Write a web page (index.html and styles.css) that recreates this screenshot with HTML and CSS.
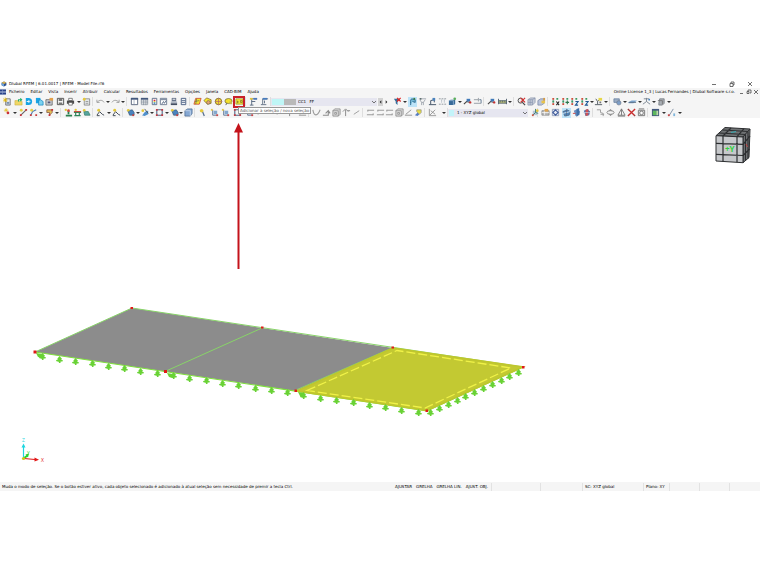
FILE: index.html
```html
<!DOCTYPE html>
<html lang="pt">
<head>
<meta charset="utf-8">
<title>Dlubal RFEM</title>
<meta name="viewport" content="width=device-width, initial-scale=1">
<link rel="stylesheet" href="styles.css">
</head>
<body>
<svg class="sprite" aria-hidden="true">
  <symbol id="cube" viewBox="0 0 10 10"><path d="M1 3l4-2 4 2v4L5 9 1 7z" fill="#2d4f8f"/><path d="M1 3l4 2v4L1 7z" fill="#6fa3d8"/><path d="M1 3l4-2 4 2-4 2z" fill="#d8b04a"/></symbol>
  <symbol id="new" viewBox="0 0 10 10"><path d="M3 2h5v7H3z" fill="#e9edf2" stroke="#555" stroke-width=".8"/><path d="M4 6h3M4 7.5h3" stroke="#3c5c8c" stroke-width=".8"/><path d="M.5 1.5l4 4M4.500 1.500l-4 4M2.500.500v5M0 3.500h5" stroke="#e2b400" stroke-width=".8"/></symbol>
  <symbol id="open" viewBox="0 0 10 10"><path d="M1 4h3l1 1h4v4H1z" fill="#f0d766" stroke="#c0a030" stroke-width=".5"/><path d="M5 5V3h3M7 1.500L8.500 3 7 4.500" fill="none" stroke="#24ae6a" stroke-width="1.200"/></symbol>
  <symbol id="cloud" viewBox="0 0 10 10"><path d="M2 1h3a4 4 0 010 8H2z" fill="#18a4e4"/><path d="M3 5h3M5 3.500L6.500 5 5 6.500" stroke="#fff" stroke-width="1" fill="none"/></symbol>
  <symbol id="blocks" viewBox="0 0 10 10"><path d="M1 1h5v6H1z" fill="#18a4e4"/><path d="M4 4l2-1 3 2v4H4z" fill="#7cd2f0" stroke="#1289c6" stroke-width=".8"/></symbol>
  <symbol id="archive" viewBox="0 0 10 10"><path d="M1 3h7v6H1z" fill="#ccd0d6" stroke="#555" stroke-width=".8"/><path d="M3 5h3v2H3z" fill="#557"/><path d="M5 1h4v3H5z" fill="#e3a04a"/></symbol>
  <symbol id="save" viewBox="0 0 10 10"><path d="M1.500 1.500h7v7h-7z" fill="#f2f2f2" stroke="#4b4b4b"/><path d="M3 2h4v2.500H3zM3 6h4v2.500H3z" fill="#777"/></symbol>
  <symbol id="print" viewBox="0 0 10 10"><path d="M3 1.500h4V4H3z" fill="#fff" stroke="#444" stroke-width=".7"/><path d="M1 4h8v3.500H1z" fill="#4a4a4a"/><path d="M3 6h4v3H3z" fill="#fff" stroke="#444" stroke-width=".7"/></symbol>
  <symbol id="doc" viewBox="0 0 10 10"><path d="M2.500 2h6v7h-6z" fill="#e5e8ea" stroke="#777" stroke-width=".8"/><path d="M4 5h3M4 7h3" stroke="#777" stroke-width=".7"/><circle cx="2.500" cy="2.500" r="1.600" fill="#e6c83c"/></symbol>
  <symbol id="undo" viewBox="0 0 10 10"><path d="M1 3v3h3M1.500 5.500C4 3 7 3 9 6" fill="none" stroke="#929292" stroke-width=".9"/></symbol>
  <symbol id="redo" viewBox="0 0 10 10"><path d="M9 3v3H6M8.500 5.500C6 3 3 3 1 6" fill="none" stroke="#929292" stroke-width=".9"/></symbol>
  <symbol id="panel" viewBox="0 0 10 10"><path d="M1.500 1.500h7v7h-7z" fill="#fff" stroke="#546078"/><path d="M1 1h8v2H1z" fill="#44597e"/><path d="M4.500 3v6" stroke="#8090a8" stroke-width=".7"/></symbol>
  <symbol id="table" viewBox="0 0 10 10"><path d="M1.500 1.500h7v7h-7zM1 4.500h8M1 6.500h8M4 3v6M6.500 3v6" fill="none" stroke="#7d8796" stroke-width=".7"/><path d="M1 1h8v2H1z" fill="#44597e"/></symbol>
  <symbol id="colors" viewBox="0 0 10 10"><path d="M2.500 1.500h5v7h-5z" fill="#fff" stroke="#5a6a84"/><path d="M4 3h2v1.500H4z" fill="#d24"/><path d="M4 4.500h2V6H4z" fill="#dc3"/><path d="M4 6h2v1.500H4z" fill="#27b"/></symbol>
  <symbol id="chart" viewBox="0 0 10 10"><path d="M1.500 1.500h7v7h-7z" fill="#fff" stroke="#5a6a84" stroke-width=".9"/><path d="M2 3h6M3 8l2-3 1 2 2-3" stroke="#5a6a84" fill="none"/></symbol>
  <symbol id="stack" viewBox="0 0 10 10"><path d="M3 1h5v4H3z" fill="#67748a"/><path d="M2 5h7v2H2z" fill="#aeb6c2"/><path d="M2 7h7v2H2z" fill="#444f63"/><path d="M4 2.500h3" stroke="#fff"/></symbol>
  <symbol id="column" viewBox="0 0 10 10"><path d="M2.500 1.500h5v7h-5z" fill="#eef1f5" stroke="#44597e"/><path d="M3 4h4M3 6h4" stroke="#44597e" stroke-width=".9"/></symbol>
  <symbol id="sel-plane" viewBox="0 0 10 10"><path d="M3 1.500h6L7 8H1z" fill="#f4e42c" stroke="#c8372d" stroke-width=".8"/><path d="M2 5l5-1M4 2L3 8" stroke="#555" stroke-width=".7"/></symbol>
  <symbol id="sel-poly" viewBox="0 0 10 10"><path d="M1 4l3-3 5 2v4L5 8z" fill="#f4e42c" stroke="#806020" stroke-width=".8"/><circle cx="6" cy="6" r="2" fill="#e7a56f" stroke="#555" stroke-width=".6"/></symbol>
  <symbol id="sel-circle" viewBox="0 0 10 10"><circle cx="5" cy="5" r="3.600" fill="#f3db31" stroke="#75602a" stroke-width=".9"/><path d="M5 1v8M1 5h8" stroke="#b26b68" stroke-width=".8"/></symbol>
  <symbol id="sel-lasso" viewBox="0 0 10 10"><ellipse cx="5" cy="4.500" rx="4" ry="2.800" fill="#f3e02b" stroke="#6f6531" stroke-width=".8"/><path d="M6 5h3v3H6z" fill="#c9bc55"/><path d="M3 7l-1 2" stroke="#555"/></symbol>
  <symbol id="sel-add" viewBox="0 0 10 10"><path d="M1 2h8v6H1z" fill="#f8e838" stroke="#8c8128" stroke-width=".7"/><path d="M3 4v3M2 5.500h2M6 4h2v2H6z" stroke="#665d24" stroke-width=".7" fill="none"/></symbol>
  <symbol id="support" viewBox="0 0 10 10"><path d="M3 9V2h6M3 5h4M1 9h4" fill="none" stroke="#53647d"/><path d="M5 1h4v2H5z" fill="#4a79bb"/><path d="M1 1h3v2H1z" fill="#dec33f"/></symbol>
  <symbol id="load" viewBox="0 0 10 10"><path d="M1 8.500h6M3 8V2h6M5 4v3" fill="none" stroke="#5b6b80"/><path d="M3 1h5v2H3z" fill="#477cbd"/></symbol>
  <symbol id="filter" viewBox="0 0 10 10"><path d="M1 2h6L5 5v4L3 7V5z" fill="#376e9b"/><path d="M4.500 1l4 4M8.500 1l-4 4" stroke="#d22" stroke-width="1.300"/></symbol>
  <symbol id="show" viewBox="0 0 10 10"><path d="M3 9C3 6 2 4 4 2l4 1v3L5 5" fill="#75b9d8" stroke="#28668c"/><path d="M6 1h2v2H6z" fill="#387b42"/></symbol>
  <symbol id="frame" viewBox="0 0 10 10"><path d="M1 2h8M2 3l2 3v3M8 3L6 6v3M4 6h2" fill="none" stroke="#8b949f" stroke-width=".8"/><circle cx="3" cy="2" r="1" fill="#566"/></symbol>
  <symbol id="member" viewBox="0 0 10 10"><path d="M1 8.500h8M3 8V4l4-1v3" fill="none" stroke="#38495d"/><path d="M5 1h3v3H5z" fill="#4b82bd"/></symbol>
  <symbol id="dots" viewBox="0 0 10 10"><path d="M1 2h8M1 8h8" stroke="#8c949c" stroke-dasharray="2 1"/><path d="M4 3v4M7 3v4" stroke="#8795a5" stroke-dasharray="1 1"/></symbol>
  <symbol id="solid" viewBox="0 0 10 10"><path d="M1 4l2-1h5v5l-2 1H1z" fill="#376a99"/><path d="M1 4h5v5" fill="none" stroke="#aac7e0" stroke-width=".7"/><circle cx="7.500" cy="2" r="1.500" fill="#5aae5d"/></symbol>
  <symbol id="link" viewBox="0 0 10 10"><path d="M1 8l3-3 4 1" stroke="#444" stroke-width="1.200" fill="none"/><path d="M4 2h4v3H4z" fill="#3f79b8"/><circle cx="8" cy="6" r="1.300" fill="#c63434"/></symbol>
  <symbol id="dims" viewBox="0 0 10 10"><path d="M1 3h5M6 1v4M1 7h8" stroke="#929aa2" fill="none"/><path d="M7 3h2v4" stroke="#5e7690" fill="none"/></symbol>
  <symbol id="ruler" viewBox="0 0 10 10"><path d="M.5 2v6M9.500 2v6" stroke="#456"/><path d="M1 4h8v3H1z" fill="#b9bd77" stroke="#536472" stroke-width=".8"/><path d="M3 4v2M5 4v2M7 4v2" stroke="#456" stroke-width=".7"/></symbol>
  <symbol id="zoomx" viewBox="0 0 10 10"><circle cx="4" cy="4" r="2.800" fill="#eee" stroke="#444"/><path d="M6 6l3 3" stroke="#444" stroke-width="1.300"/><path d="M4 1l5 5M9 1L4 6" stroke="#d72b2b" stroke-width="1.200"/></symbol>
  <symbol id="box" viewBox="0 0 10 10"><path d="M1 3l3-2h5v5L6 9H1z" fill="#c4cbd8" stroke="#8b95ab" stroke-width=".8"/><path d="M1 3h5v6M6 3l3-2M3.500 3v6M1 6h5" fill="none" stroke="#8390ac" stroke-width=".7"/></symbol>
  <symbol id="boxy" viewBox="0 0 10 10"><path d="M1 4l3-2h4v5L5 9H1z" fill="#b9c4da" stroke="#7583a3" stroke-width=".8"/><path d="M5 4h4v3H5z" fill="#e8c34b"/><path d="M7 1h2v3H7z" fill="#d39b45"/></symbol>
  <symbol id="axis" viewBox="0 0 10 10"><path d="M2.500 2v6" stroke="#8fa0b2" stroke-width=".8"/><path d="M1.500 1h2v2h-2zM1.500 7h2v2h-2z" fill="#d24b37"/><path d="M1.500 4h2v2h-2zM6 1h2v2H6z" fill="#3a9b61"/></symbol>
  <symbol id="axisx" viewBox="0 0 10 10"><use href="#axis"/><path d="M6 5l3 4M9 5L6 9" stroke="#222" stroke-width="1.200"/></symbol>
  <symbol id="axisy" viewBox="0 0 10 10"><use href="#axis"/><path d="M5 6h4M7 4v4" stroke="#2b774d" stroke-width="1.200"/></symbol>
  <symbol id="axisz" viewBox="0 0 10 10"><use href="#axis"/><path d="M6 5h3L6 9h3" fill="none" stroke="#1f5894" stroke-width="1.200"/></symbol>
  <symbol id="pick" viewBox="0 0 10 10"><path d="M2 2l2 3 3-3M4 5v3M1 8.500h8" fill="none" stroke="#4b555c"/><path d="M5 1h4v3H5z" fill="#e5d649"/><path d="M6 5h2v2H6z" fill="#777"/></symbol>
  <symbol id="render" viewBox="0 0 10 10"><path d="M1 2h6v4H1z" fill="#9bacc4" stroke="#627a9b" stroke-width=".8"/><circle cx="6.500" cy="6.500" r="2.400" fill="#7e9fc9" stroke="#6c7789" stroke-width=".7"/></symbol>
  <symbol id="beam" viewBox="0 0 10 10"><path d="M0 6l4-2h6L6 7H1z" fill="#7da5cf"/><path d="M1 6h8" stroke="#5d7085"/></symbol>
  <symbol id="triad" viewBox="0 0 10 10"><path d="M1 8l4-3V1M5 5l4 3M2 2h6" fill="none" stroke="#77828f"/><circle cx="8" cy="3" r="1" fill="#4382bf"/></symbol>
  <symbol id="slab" viewBox="0 0 10 10"><path d="M3 2h5v5l-2 2H2V7z" fill="#a9aeb4" stroke="#6b737a" stroke-width=".8"/><path d="M1 4h5v4" stroke="#777" fill="none"/></symbol>
  <symbol id="node" viewBox="0 0 10 10"><path d="M2 1l3 3M5 1L2 4M3.500 0v5M1 2.500h5" stroke="#e4c22d" stroke-width=".8"/><circle cx="5.500" cy="5.500" r="1.500" fill="#c92f37"/></symbol>
  <symbol id="line" viewBox="0 0 10 10"><path d="M2 8l6-6" stroke="#666" stroke-width="1.200"/><path d="M1 7h2v2H1zM7 1h2v2H7z" fill="#c92f37"/><circle cx="2.500" cy="2.500" r="1.600" fill="#e3d04a"/></symbol>
  <symbol id="poly" viewBox="0 0 10 10"><path d="M2 8l2-4 4-2" stroke="#4678b2" stroke-width="1.200" fill="none"/><path d="M1 7h2v2H1zM7 7h2v2H7z" fill="#c83b3b"/><circle cx="3" cy="2.500" r="1.600" fill="#e3d04a"/></symbol>
  <symbol id="surf" viewBox="0 0 10 10"><path d="M2 2h6v3L5 8V5H2z" fill="#e5bd58" stroke="#7a5040" stroke-width=".8"/><path d="M4 7h2v2H4zM7 1h2v2H7z" fill="#c92f37"/></symbol>
  <symbol id="nsup" viewBox="0 0 10 10"><path d="M5 3v4M2 8.500h7" stroke="#2a814e" stroke-width="2"/><circle cx="5" cy="3" r="1.500" fill="#d04638"/><circle cx="2" cy="2" r="1.300" fill="#e3c83a"/></symbol>
  <symbol id="lsup" viewBox="0 0 10 10"><path d="M1 5h8M3 5v4M7 5v4M1.500 8.500h7" stroke="#2f855a" stroke-width="1.300"/><path d="M1 4h8" stroke="#c84036" stroke-width="1.200"/><circle cx="3" cy="2" r="1.300" fill="#e3c83a"/></symbol>
  <symbol id="ssup" viewBox="0 0 10 10"><path d="M2 4h5l2 4H3z" fill="#58a5a0" stroke="#35806a" stroke-width=".8"/><circle cx="2.500" cy="2.500" r="1.500" fill="#e3c83a"/></symbol>
  <symbol id="hinge" viewBox="0 0 10 10"><path d="M1 8l3-4 3 3 2 1M1 8.500h3" fill="none" stroke="#454d57" stroke-width="1.100"/><circle cx="3" cy="2.500" r="1.600" fill="#e3c83a"/></symbol>
  <symbol id="solidn" viewBox="0 0 10 10"><path d="M2 3l5-1 2 3v3L4 8z" fill="#4a83be" stroke="#31506e" stroke-width=".7"/><circle cx="2.500" cy="2.500" r="1.500" fill="#e3c83a"/><path d="M7 7h2v2H7z" fill="#ca413e"/></symbol>
  <symbol id="opening" viewBox="0 0 10 10"><path d="M2 2h6v6H2z" fill="none" stroke="#506886" stroke-width="1.200"/><path d="M1 1h2v2H1zM7 1h2v2H7zM1 7h2v2H1zM7 7h2v2H7z" fill="#c33b44"/></symbol>
  <symbol id="cut" viewBox="0 0 10 10"><path d="M1 8c2 0 2-5 7-5v4L4 9z" fill="#4f90cc"/><path d="M4 1l4 5" stroke="#555"/><circle cx="2" cy="3" r="1.500" fill="#e3c83a"/></symbol>
  <symbol id="cubeb" viewBox="0 0 10 10"><path d="M1 3l3-2h5v5L7 9H1z" fill="#86a8d3" stroke="#48688f" stroke-width=".8"/><path d="M1 3h6v6" stroke="#dce7f5" fill="none" stroke-width=".7"/></symbol>
  <symbol id="pin" viewBox="0 0 10 10"><path d="M5 4l2 5" stroke="#566f90" stroke-width="1.400"/><circle cx="4" cy="3" r="2" fill="#e5c93b"/></symbol>
  <symbol id="case" viewBox="0 0 10 10"><path d="M3 2v6h6" stroke="#566f90" fill="none"/><path d="M4 3h4v4H4z" fill="#83a8ce"/><path d="M1 1h2v2H1z" fill="#e5c93b"/><path d="M7 7h2v2H7z" fill="#ce4949"/></symbol>
  <symbol id="arc" viewBox="0 0 10 10"><path d="M1 2c1 7 5 8 8 0" fill="none" stroke="#999" stroke-width="1.200"/></symbol>
  <symbol id="arrow" viewBox="0 0 10 10"><path d="M1 8h6V4M4 6l3-3 2 3" fill="none" stroke="#8c8c8c" stroke-width="1.200"/></symbol>
  <symbol id="graybox" viewBox="0 0 10 10"><path d="M1 3l2-2h6v6L7 9H1z" fill="#ddd" stroke="#888" stroke-width=".9"/><path d="M1 3h6v6M3 5h2v2H3z" fill="none" stroke="#888" stroke-width=".8"/></symbol>
  <symbol id="tree" viewBox="0 0 10 10"><path d="M4 9V2M1 4l3-3 3 3M6 3h3" fill="none" stroke="#858585"/></symbol>
  <symbol id="slash" viewBox="0 0 10 10"><path d="M2 7l6-4" stroke="#999"/></symbol>
  <symbol id="bars" viewBox="0 0 10 10"><path d="M2 2.500h7M1 7.500h7M2 2v2M8 6v2" stroke="#919191" fill="none"/></symbol>
  <symbol id="angle" viewBox="0 0 10 10"><path d="M2 7l6-5M1 8h8" stroke="#919191" fill="none"/></symbol>
  <symbol id="brush" viewBox="0 0 10 10"><path d="M1 8l3-3 2 2-2 2z" fill="#577ec2"/><path d="M3 2h5v3L6 7 3 4z" fill="#e7dc46" stroke="#888" stroke-width=".7"/></symbol>
  <symbol id="graph" viewBox="0 0 10 10"><path d="M1.500 1v7.500H9M2 8l6-6M3 3l5 4" fill="none" stroke="#8b8b8b" stroke-width=".9"/></symbol>
  <symbol id="plane" viewBox="0 0 10 10"><path d="M2 3h5v5H2z" fill="#b7c5d6"/><path d="M2 8l3-3 3 1M5 5V1" fill="none" stroke="#397e6e"/><path d="M1 7h2v2H1z" fill="#c54"/><circle cx="7" cy="3" r="1.500" fill="#e0c23f"/></symbol>
  <symbol id="grid" viewBox="0 0 10 10"><path d="M1 3h8v5H1z" fill="#bbb" stroke="#777" stroke-width=".7"/><path d="M1 5h8M4 3v5" stroke="#fff" stroke-width=".7"/><path d="M4 1h4v3H4z" fill="#e0a44b"/></symbol>
  <symbol id="snap" viewBox="0 0 10 10"><path d="M1.500 1.500h7v7h-7z" fill="#e5e9f3" stroke="#8d9bb9"/><path d="M5 2l3 3-3 3-3-3z" fill="none" stroke="#415d9c" stroke-width="1.200"/></symbol>
  <symbol id="disc" viewBox="0 0 10 10"><path d="M1 4l5-2 3 2-1 4-5 1z" fill="#4e83b8" stroke="#445a76" stroke-width=".7"/><path d="M1 6l8-2" stroke="#d8e9f6"/><path d="M5 1v8" stroke="#54657c" stroke-width=".7"/></symbol>
  <symbol id="discb" viewBox="0 0 10 10"><path d="M2 3l4-2 3 3-1 4-4 1z" fill="#6c8fc0"/><path d="M5 1l3-1v7L5 10z" fill="#3f6fa8"/><path d="M1 6h3" stroke="#c44" stroke-width="1"/></symbol>
  <symbol id="discr" viewBox="0 0 10 10"><path d="M2 3l4-2 3 3-1 4-4 1z" fill="#5278b2"/><path d="M4 2l3-1v7L4 9z" fill="#cf4f53"/><path d="M1 5h8" stroke="#ccd8e8" stroke-width=".7"/></symbol>
  <symbol id="hook" viewBox="0 0 10 10"><path d="M1 2h4v3l3 1v3M5 7h4" fill="none" stroke="#999"/></symbol>
  <symbol id="rhomb" viewBox="0 0 10 10"><path d="M5 1l2 2H3zM5 9l2-2H3z" fill="#888"/><ellipse cx="5" cy="5" rx="4" ry="2" fill="none" stroke="#888"/></symbol>
  <symbol id="mirror" viewBox="0 0 10 10"><path d="M5 1L1 8h8zM5 1v7M1 9h8" fill="none" stroke="#777"/></symbol>
  <symbol id="del" viewBox="0 0 10 10"><path d="M1 1l8 8M9 1L1 9" stroke="#c92b2b" stroke-width="1.500"/><path d="M1 1h1v1H1zM8 8h1v1H8z" fill="#555"/></symbol>
  <symbol id="camera" viewBox="0 0 10 10"><path d="M1.500 2.500h7v6h-7z" fill="#ddd" stroke="#777"/><circle cx="5" cy="5.500" r="2" fill="#fff" stroke="#777"/><path d="M2 1h6" stroke="#777"/></symbol>
  <symbol id="sheet" viewBox="0 0 10 10"><path d="M1 1h8v8H1z" fill="#44597e"/><path d="M2 3h4v5H2z" fill="#5cb85c"/><path d="M6 3h2v5H6z" fill="#bde0a5"/></symbol>
  <symbol id="dim" viewBox="0 0 10 10"><path d="M2 9l5-8" stroke="#7b8ba0"/><path d="M1 7h2v2H1z" fill="#c44"/><path d="M7 6h2v3H7z" fill="#7fb5db"/></symbol>
  <symbol id="foot" viewBox="0 0 8 8"><path d="M4 0l3 3.500-1.500.300L8 5 7 6.500 5.500 6 5 8H3.500L3 6.500.500 6 0 4.500l2-.200L1.500 3z" fill="#69d235"/></symbol>
</svg>

<main class="app">
  <header class="titlebar">
    <svg class="logo" aria-hidden="true"><use href="#cube"/></svg>
    <h1>Dlubal RFEM | 6.01.0017 | RFEM - Model File.rf6</h1>
    <div class="window-buttons">
      <button aria-label="Minimizar"><svg viewBox="0 0 6 6"><path d="M1 3.500h4" /></svg></button>
      <button aria-label="Restaurar"><svg viewBox="0 0 6 6"><path d="M1 2.500h3v3H1zM2 2V1h3v3H4"/></svg></button>
      <button aria-label="Fechar"><svg viewBox="0 0 6 6"><path d="M1 1l4 4M5 1L1 5"/></svg></button>
    </div>
  </header>

  <nav class="menubar">
    <svg class="badge" viewBox="0 0 7 6" aria-hidden="true"><path d="M0 0h7v6H0z" fill="#27418a"/><path d="M0 3h7" stroke="#dce3f3"/><path d="M3 0v6" stroke="#8fa1cc" stroke-width=".7"/></svg>
    <button>Ficheiro</button><button>Editar</button><button>Vista</button><button>Inserir</button><button>Atribuir</button><button>Calcular</button><button>Resultados</button><button>Ferramentas</button><button>Opções</button><button>Janela</button><button>CAD-BIM</button><button>Ajuda</button>
    <span class="license">Online License 1_3 | Lucas Fernandes | Dlubal Software s.r.o.</span>
    <div class="document-buttons">
      <button aria-label="Minimizar documento"><svg viewBox="0 0 6 6"><path d="M1 4.500h3"/></svg></button>
      <button aria-label="Restaurar documento"><svg viewBox="0 0 6 6"><path d="M1 2.500h2v2H1zM2 2V1h3v3H4"/></svg></button>
      <button aria-label="Fechar documento"><svg viewBox="0 0 6 6"><path d="M1 1l4 4M5 1L1 5"/></svg></button>
    </div>
  </nav>

  <div class="toolbar standard" role="toolbar" aria-label="Padrão">
    <div class="group">
      <button aria-label="Novo"><svg><use href="#new"/></svg></button>
      <button aria-label="Abrir"><svg><use href="#open"/></svg></button>
      <button aria-label="Nuvem"><svg><use href="#cloud"/></svg></button>
      <button aria-label="Blocos"><svg><use href="#blocks"/></svg></button>
      <button aria-label="Arquivo"><svg><use href="#archive"/></svg></button>
      <button aria-label="Guardar"><svg><use href="#save"/></svg></button>
      <button aria-label="Imprimir"><svg><use href="#print"/></svg></button>
      <button class="more" aria-label="Opções de impressão"></button>
      <button aria-label="Relatório"><svg><use href="#doc"/></svg></button>
    </div>
    <div class="group">
      <button aria-label="Anular"><svg><use href="#undo"/></svg></button><button class="more" aria-label="Lista anular"></button>
      <button aria-label="Refazer"><svg><use href="#redo"/></svg></button><button class="more" aria-label="Lista refazer"></button>
    </div>
    <div class="group">
      <button aria-label="Navegador"><svg><use href="#panel"/></svg></button>
      <button aria-label="Tabelas"><svg><use href="#table"/></svg></button>
      <button aria-label="Painel de cores"><svg><use href="#colors"/></svg></button>
      <button aria-label="Diagramas"><svg><use href="#chart"/></svg></button>
      <button aria-label="Camadas"><svg><use href="#stack"/></svg></button>
      <button aria-label="Painel"><svg><use href="#column"/></svg></button>
    </div>
    <div class="group">
      <button aria-label="Selecionar plano"><svg><use href="#sel-plane"/></svg></button>
      <button aria-label="Selecionar polígono"><svg><use href="#sel-poly"/></svg></button>
      <button aria-label="Selecionar círculo"><svg><use href="#sel-circle"/></svg></button>
      <button aria-label="Selecionar laço"><svg><use href="#sel-lasso"/></svg></button>
      <button class="marked" aria-describedby="tip" aria-label="Adicionar à seleção"><svg><use href="#sel-add"/></svg><span class="tooltip" id="tip" role="tooltip">Adicionar à seleção / nova seleção</span></button>
    </div>
    <div class="group">
      <button aria-label="Apoios"><svg><use href="#support"/></svg></button>
      <button aria-label="Cargas"><svg><use href="#load"/></svg></button>
    </div>
    <div class="combo">
      <i class="swatch cyan"></i><i class="swatch gray"></i>
      <select aria-label="Caso de carga"><option>CC1&ensp;&nbsp;FF</option></select>
      <svg class="chevron" viewBox="0 0 6 6" aria-hidden="true"><path d="M1 2l2 2 2-2"/></svg>
    </div>
    <div class="group">
      <button class="step" aria-label="Anterior"><svg viewBox="0 0 6 6"><path d="M4 1v4L2 3z"/></svg></button>
      <button class="step" aria-label="Seguinte"><svg viewBox="0 0 6 6"><path d="M2 1v4l2-2z"/></svg></button>
    </div>
    <div class="group">
      <button aria-label="Remover filtro"><svg><use href="#filter"/></svg></button><button class="more" aria-label="Mais filtros"></button>
      <button class="on" aria-label="Mostrar"><svg><use href="#show"/></svg></button>
      <button aria-label="Pórtico"><svg><use href="#frame"/></svg></button>
      <button aria-label="Barra"><svg><use href="#member"/></svg></button>
      <button aria-label="Pontos"><svg><use href="#dots"/></svg></button>
      <button aria-label="Sólido"><svg><use href="#solid"/></svg></button><button class="more" aria-label="Mais sólidos"></button>
      <button aria-label="Ligação"><svg><use href="#link"/></svg></button>
      <button aria-label="Cotas"><svg><use href="#dims"/></svg></button>
    </div>
    <div class="group">
      <button aria-label="Valores"><svg><use href="#link"/></svg></button>
      <button aria-label="Régua"><svg><use href="#ruler"/></svg></button><button class="more" aria-label="Mais réguas"></button>
    </div>
    <div class="group">
      <button aria-label="Zoom"><svg><use href="#zoomx"/></svg></button>
      <button aria-label="Caixa"><svg><use href="#box"/></svg></button>
      <button aria-label="Vista anterior"><svg><use href="#boxy"/></svg></button>
    </div>
    <div class="group">
      <button aria-label="Vista X"><svg><use href="#axisx"/></svg></button>
      <button aria-label="Vista Y"><svg><use href="#axisy"/></svg></button>
      <button aria-label="Vista Z"><svg><use href="#axisz"/></svg></button>
      <button aria-label="Vista −Z"><svg><use href="#axisz"/></svg></button><button class="more" aria-label="Mais vistas"></button>
      <button aria-label="Escolher"><svg><use href="#pick"/></svg></button><button class="more" aria-label="Mais escolhas"></button>
    </div>
    <div class="group">
      <button aria-label="Renderização"><svg><use href="#render"/></svg></button><button class="more" aria-label="Mais renderização"></button>
      <button aria-label="Viga"><svg><use href="#beam"/></svg></button><button class="more" aria-label="Mais vigas"></button>
      <button aria-label="Eixos"><svg><use href="#triad"/></svg></button><button class="more" aria-label="Mais eixos"></button>
      <button aria-label="Laje"><svg><use href="#slab"/></svg></button><button class="more" aria-label="Mais lajes"></button>
    </div>
  </div>

  <div class="toolbar modelling" role="toolbar" aria-label="Modelação">
    <div class="group">
      <button aria-label="Nó"><svg><use href="#node"/></svg></button><button class="more" aria-label="Mais nós"></button>
      <button aria-label="Linha"><svg><use href="#line"/></svg></button>
      <button aria-label="Polilinha"><svg><use href="#poly"/></svg></button><button class="more" aria-label="Mais linhas"></button>
      <button aria-label="Superfície"><svg><use href="#surf"/></svg></button><button class="more" aria-label="Mais superfícies"></button>
    </div>
    <div class="group">
      <button aria-label="Apoio nodal"><svg><use href="#nsup"/></svg></button>
      <button aria-label="Apoio de linha"><svg><use href="#lsup"/></svg></button>
      <button aria-label="Apoio de superfície"><svg><use href="#ssup"/></svg></button>
    </div>
    <div class="group">
      <button aria-label="Articulação"><svg><use href="#hinge"/></svg></button><button class="more" aria-label="Mais articulações"></button>
      <button aria-label="Articulação de linha"><svg><use href="#hinge"/></svg></button>
    </div>
    <div class="group">
      <button aria-label="Novo sólido"><svg><use href="#solidn"/></svg></button><button class="more" aria-label="Mais sólidos"></button>
      <button aria-label="Corte"><svg><use href="#cut"/></svg></button><button class="more" aria-label="Mais cortes"></button>
      <button aria-label="Abertura"><svg><use href="#opening"/></svg></button><button class="more" aria-label="Mais aberturas"></button>
      <button aria-label="Interseção"><svg><use href="#solidn"/></svg></button><button class="more" aria-label="Mais interseções"></button>
      <button aria-label="Bloco"><svg><use href="#cubeb"/></svg></button>
    </div>
    <div class="group">
      <button aria-label="Carga nodal"><svg><use href="#pin"/></svg></button>
      <button aria-label="Carga de linha"><svg><use href="#case"/></svg></button>
      <button aria-label="Carga de barra"><svg><use href="#case"/></svg></button>
      <button aria-label="Carga de superfície"><svg><use href="#opening"/></svg></button>
      <button aria-label="Carga de sólido"><svg><use href="#case"/></svg></button>
      <button aria-label="Carga livre"><svg><use href="#slash"/></svg></button><button class="more" aria-label="Mais cargas"></button>
      <button aria-label="Carga imposta"><svg><use href="#slash"/></svg></button>
      <button aria-label="Imperfeição"><svg><use href="#tree"/></svg></button>
      <button aria-label="Deslocamento"><svg><use href="#angle"/></svg></button>
    </div>
    <div class="group">
      <button aria-label="Arco"><svg><use href="#arc"/></svg></button>
      <button aria-label="Mover"><svg><use href="#arrow"/></svg></button>
      <button aria-label="Volume"><svg><use href="#graybox"/></svg></button>
      <button aria-label="Árvore"><svg><use href="#tree"/></svg></button>
      <button aria-label="Segmento"><svg><use href="#slash"/></svg></button>
    </div>
    <div class="group">
      <button aria-label="Resultado 1"><svg><use href="#bars"/></svg></button>
      <button aria-label="Resultado 2"><svg><use href="#bars"/></svg></button>
      <button aria-label="Resultado 3"><svg><use href="#bars"/></svg></button>
      <button aria-label="Resultado 4"><svg><use href="#graybox"/></svg></button>
      <button aria-label="Ângulo"><svg><use href="#angle"/></svg></button>
      <button aria-label="Pincel"><svg><use href="#brush"/></svg></button>
    </div>
    <div class="group">
      <button aria-label="Gráfico"><svg><use href="#graph"/></svg></button><button class="more" aria-label="Mais gráficos"></button>
    </div>
    <div class="combo">
      <i class="swatch small"></i>
      <select aria-label="Sistema de coordenadas"><option>1 - XYZ global</option></select>
      <svg class="chevron" viewBox="0 0 6 6" aria-hidden="true"><path d="M1 2l2 2 2-2"/></svg>
    </div>
    <div class="group"><button aria-label="Plano de trabalho"><svg><use href="#plane"/></svg></button></div>
    <div class="group">
      <button aria-label="Grelha"><svg><use href="#grid"/></svg></button>
      <button aria-label="Ajustar"><svg><use href="#snap"/></svg></button>
      <button class="on" aria-label="Plano XY"><svg><use href="#disc"/></svg></button>
      <button aria-label="Plano YZ"><svg><use href="#discb"/></svg></button>
      <button aria-label="Plano XZ"><svg><use href="#discr"/></svg></button>
    </div>
    <div class="group">
      <button aria-label="Copiar"><svg><use href="#hook"/></svg></button>
      <button aria-label="Rodar"><svg><use href="#rhomb"/></svg></button>
      <button aria-label="Espelhar"><svg><use href="#mirror"/></svg></button>
      <button aria-label="Eliminar"><svg><use href="#del"/></svg></button>
      <button aria-label="Captura"><svg><use href="#camera"/></svg></button>
    </div>
    <div class="group">
      <button aria-label="Folha"><svg><use href="#sheet"/></svg></button><button class="more" aria-label="Mais folhas"></button>
      <button aria-label="Cota"><svg><use href="#dim"/></svg></button><button class="more" aria-label="Mais cotas"></button>
    </div>
  </div>

  <svg class="model" viewBox="0 118 760 364" role="img" aria-label="Modelo">
    <path d="M35 352L132 308 393 348 296 391z" fill="#8c8c8c"/>
    <path d="M296 391L393 348 523 367 427 411z" fill="#c3c932"/>
    <path d="M35 352L132 308 523 367M165 371.500L262 328M296 390L393 347.500" fill="none" stroke="#88d468" stroke-width="1"/>
    <path d="M35 352L427 411 523 367" fill="none" stroke="#7fe03c" stroke-width="1.200"/>
    <path d="M297 391L393 348 523 367 427 410.500z" fill="none" stroke="#c0c62c" stroke-width="1.600"/>
    <path d="M307 390.500L397 350.500 511 368 425 408z" fill="none" stroke="#f0f248" stroke-width="1.300" stroke-dasharray="9 3"/>
    <g>
      <path d="M36 353l6 1v4l-4-1z" fill="#69d235"/><path d="M167 373l6 1v4l-4-1z" fill="#69d235"/><path d="M298 392l6 1v4l-4-1z" fill="#69d235"/>
      <use href="#foot" x="39" y="353" width="7" height="7"/><use href="#foot" x="56" y="356" width="7" height="7"/><use href="#foot" x="72" y="358" width="7" height="7"/><use href="#foot" x="89" y="360" width="7" height="7"/><use href="#foot" x="105" y="363" width="7" height="7"/><use href="#foot" x="121" y="365" width="7" height="7"/><use href="#foot" x="137" y="368" width="7" height="7"/><use href="#foot" x="154" y="370" width="7" height="7"/>
      <use href="#foot" x="170" y="372" width="7" height="7"/><use href="#foot" x="186" y="375" width="7" height="7"/><use href="#foot" x="203" y="377" width="7" height="7"/><use href="#foot" x="219" y="380" width="7" height="7"/><use href="#foot" x="235" y="382" width="7" height="7"/><use href="#foot" x="252" y="385" width="7" height="7"/><use href="#foot" x="268" y="387" width="7" height="7"/><use href="#foot" x="284" y="389" width="7" height="7"/>
      <use href="#foot" x="300" y="392" width="7" height="7"/><use href="#foot" x="317" y="395" width="7" height="7"/><use href="#foot" x="333" y="397" width="7" height="7"/><use href="#foot" x="350" y="399" width="7" height="7"/><use href="#foot" x="366" y="402" width="7" height="7"/><use href="#foot" x="382" y="404" width="7" height="7"/><use href="#foot" x="398" y="407" width="7" height="7"/><use href="#foot" x="415" y="409" width="7" height="7"/>
      <use href="#foot" x="427" y="409" width="7" height="7"/><use href="#foot" x="436" y="405" width="7" height="7"/><use href="#foot" x="445" y="401" width="7" height="7"/><use href="#foot" x="454" y="397" width="7" height="7"/><use href="#foot" x="462" y="393" width="7" height="7"/><use href="#foot" x="471" y="389" width="7" height="7"/><use href="#foot" x="480" y="385" width="7" height="7"/><use href="#foot" x="489" y="381" width="7" height="7"/><use href="#foot" x="498" y="377" width="7" height="7"/><use href="#foot" x="506" y="373" width="7" height="7"/><use href="#foot" x="515" y="369" width="7" height="7"/>
    </g>
    <path d="M33.500 350.500h3v3h-3zM164 370h3v3h-3zM294.500 389.500h2.500v2.500h-2.500zM425.500 409.500h2.500v2.500h-2.500zM522 366h2.500v2.500H522zM130.500 307h2.500v2h-2.500zM261 326.500h2.500v2H261zM391.500 346.500h2.500v2h-2.500z" fill="#e01818"/>

    <path d="M238.500 269V130" stroke="#c4131b" stroke-width="2"/>
    <path d="M238.500 123l4.500 9.500h-9z" fill="#c4131b"/>

    <g stroke="#2c2e30" stroke-linejoin="round">
      <path d="M716 135.700L725 127.500 750 129 743 137z" fill="#6f7274"/>
      <path d="M743 137L750 129 749 157.500 743 162.700z" fill="#77797c"/>
      <path d="M716 135.700L743 137V162.700L716 161z" fill="#c6c8cb"/>
      <path d="M723 136V161.500M737 136.600V162.300M716 143.300L743 144.300 750 136M716 154.300L743 155.500 749.500 149M723 136L731 128M737 136.600L744 128.600M719 133L745.500 134.500M722.500 130L748 131.500M745.500 134.500V160.500M748 131.500V158.500" fill="none" stroke-width="1.200"/>
    </g>
    <path d="M731 132.500l5-1" stroke="#37aab0" stroke-width="1.200"/><path d="M746 144l1.500 3" stroke="#c04444"/>
    <text x="725" y="152" class="face">+Y</text>

    <g>
      <path d="M23.500 458V447" stroke="#1ed6e0" stroke-width="1.200"/><path d="M23.500 443.500l2 4h-4z" fill="#1ed6e0"/>
      <path d="M23.500 458.500l4-3" stroke="#2ad32a" stroke-width="2"/><path d="M29 453.500l-1 4-2.500-3z" fill="#2ad32a"/>
      <path d="M24 458.500l11 1" stroke="#e11818" stroke-width="1.200"/><path d="M39 459.700l-4.500 1.800v-4z" fill="#e11818"/>
      <circle cx="23.500" cy="458.500" r="1.600" fill="#cfc61c"/>
      <text x="22" y="442" class="axis-z">Z</text><text x="27" y="455" class="axis-y">Y</text><text x="41" y="462" class="axis-x">X</text>
    </g>
  </svg>

  <footer class="statusbar">
    <span class="hint">Muda o modo de seleção. Se o botão estiver ativo, cada objeto selecionado é adicionado à atual seleção sem necessidade de premir a tecla Ctrl.</span>
    <span class="modes"><button>AJUSTAR</button><button>GRELHA</button><button>GRELHA LIN.</button><button>AJUST. OBJ.</button></span>
    <span></span><span></span>
    <span>SC: XYZ global</span><span>Plano: XY</span>
    <span></span><span></span><span></span>
  </footer>
</main>
</body>
</html>
```
FILE: styles.css
```css
*, *::after { box-sizing: border-box; }

body {
  margin: 0;
  background: #fff;
  color: #000;
  font: 4px/6px "DejaVu Sans", "Noto Sans", sans-serif;
}

button {
  margin: 0;
  padding: 0;
  border: 0;
  background: none;
  color: inherit;
  font: inherit;
}

.sprite { position: absolute; width: 0; height: 0; }

.app { padding-top: 79px; }

.titlebar {
  display: flex;
  align-items: center;
  gap: 2px;
  height: 9px;
  padding: 0 7px 0 1px;
}

.titlebar h1 { margin: 0; font: inherit; }
.logo { width: 6px; height: 6px; }

.window-buttons { display: flex; gap: 12px; margin-left: auto; }

.window-buttons svg,
.document-buttons svg {
  display: block;
  width: 6px;
  height: 6px;
  fill: none;
  stroke: #333;
  stroke-width: .7;
}

.menubar {
  display: flex;
  align-items: center;
  gap: 6px;
  height: 8px;
  padding-right: 1px;
  background: #f5f5f5;
}

.badge { width: 6px; height: 6px; margin-right: -3px; }
.license { margin-left: auto; }
.document-buttons { display: flex; gap: 1px; margin-left: -2px; }

.toolbar {
  display: grid;
  align-items: center;
  height: 11px;
  background: #f5f5f5;
}

.standard {
  grid-template-columns: 93px 34px 63px 56px 25px 106px 13px 94px 30px 34px 62px 63px;
}

.modelling {
  grid-template-columns: 61px 32px 30px 72px 114px 54px 62px 23px 80px 10px 55px 55px 36px;
}

.group {
  display: flex;
  justify-content: space-between;
  align-items: center;
  height: 9px;
  padding: 0 1px 0 3px;
  border-right: 1px solid #dedede;
}

.group:last-child { border-color: transparent; }

.group button { width: 9px; height: 10px; }
.group svg { display: block; width: 9px; height: 9px; margin: auto; }

.group .more { width: 4px; }

.more::after {
  content: "";
  display: block;
  width: 4px;
  border: solid transparent;
  border-width: 2px 2px 0;
  border-top-color: #333;
}

.group .on { background: #bde3f8; }

.group .marked {
  position: relative;
  outline: 2px solid #c9202a;
  outline-offset: -1px;
  width: 10px;
}

.tooltip {
  position: absolute;
  z-index: 2;
  top: 10px;
  left: 4px;
  padding: 0 1px;
  border: 1px solid #999;
  background: #fff;
  color: #555;
  line-height: 5px;
  white-space: nowrap;
}

.group .step { width: 5px; height: 8px; }
.step:first-child { background: #d2d2d2; }
.group .step svg { width: 5px; height: 6px; fill: #222; }
.group:has(.step) { padding: 0 1px; border: 0; }

.combo {
  display: flex;
  align-items: center;
  height: 8px;
  background: #e6e6f0;
}

.combo select {
  flex: 1;
  min-width: 0;
  height: 8px;
  padding: 0 2px;
  border: 0;
  appearance: none;
  background: none;
  color: #000;
  font: inherit;
}

.swatch { height: 6px; }
.cyan { width: 12px; margin-left: 1px; background: #bff6f6; }
.gray { width: 12px; background: #b9b9b9; }
.small { width: 5px; margin: 0 1px; background: #c4f4fa; }

.chevron { width: 6px; height: 6px; fill: none; stroke: #555; stroke-width: .8; }

.model { display: block; width: 100%; }
.model text { font-family: "Open Sans", sans-serif; }
.face { font-size: 8px; font-weight: bold; fill: #2fd33c; }
.axis-x { font-size: 5px; fill: #e11818; }
.axis-y { font-size: 5px; fill: #2ad32a; }
.axis-z { font-size: 5px; fill: #1ed6e0; }

.statusbar {
  display: grid;
  grid-template-columns: 1fr 99px 49px 42px 61px 26px 30px 30px 30px;
  align-items: center;
  height: 9px;
  background: #f5f5f5;
}

.statusbar > span {
  height: 8px;
  padding-left: 2px;
  border-right: 1px solid #e2e2e2;
  line-height: 8px;
  white-space: nowrap;
}

.statusbar > .hint { border-right-color: transparent; }
.statusbar > span:last-child { border-right-color: transparent; }
.modes { display: flex; gap: 4px; }
```
